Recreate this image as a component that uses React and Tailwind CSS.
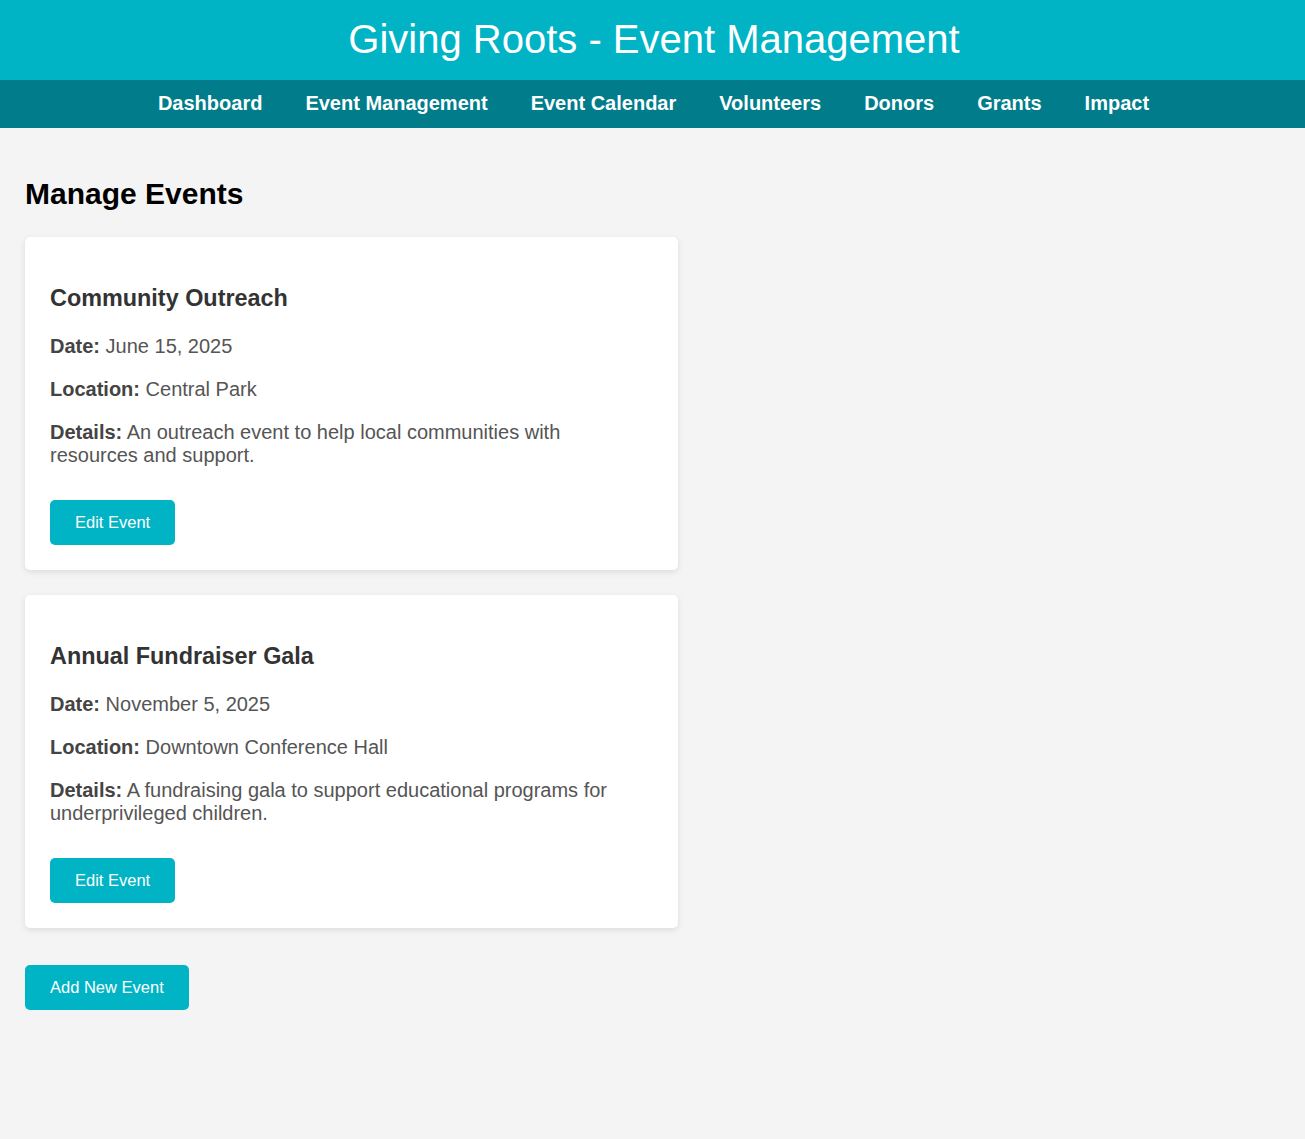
import React from "react";

const events = [
  {
    title: "Community Outreach",
    date: "June 15, 2025",
    location: "Central Park",
    details: "An outreach event to help local communities with resources and support.",
  },
  {
    title: "Annual Fundraiser Gala",
    date: "November 5, 2025",
    location: "Downtown Conference Hall",
    details: "A fundraising gala to support educational programs for underprivileged children.",
  },
];

const nav = ["Dashboard", "Event Management", "Event Calendar", "Volunteers", "Donors", "Grants", "Impact"];

function EventCard({ e }) {
  return (
    <div className="bg-white rounded-[5px] shadow-[0_2px_6px_rgba(0,0,0,0.1)] px-[25px] pt-[48px] pb-[25px] w-[653px]">
      <h3 className="text-[23.4px] font-bold text-[#333] leading-[27px]">{e.title}</h3>
      <p className="mt-[23px] text-[20px] leading-[23px] text-[#555]">
        <strong className="text-[#444]">Date:</strong> {e.date}
      </p>
      <p className="mt-[20px] text-[20px] leading-[23px] text-[#555]">
        <strong className="text-[#444]">Location:</strong> {e.location}
      </p>
      <p className="mt-[20px] text-[20px] leading-[23px] text-[#555] w-[560px]">
        <strong className="text-[#444]">Details:</strong> {e.details}
      </p>
      <button className="mt-[33px] h-[45px] px-[25px] bg-[#00b4c5] text-white rounded-[5px] text-[16.5px] leading-[19px] block">
        Edit Event
      </button>
    </div>
  );
}

export default function App() {
  return (
    <div className="min-h-[1139px] bg-[#f4f4f4] font-['Liberation_Sans',Arial,sans-serif]">
      <header className="h-[80px] bg-[#00b4c5] flex items-center justify-center pb-[3px]">
        <h1 className="text-[40px] text-white leading-[46px] pl-[3px]">Giving Roots - Event Management</h1>
      </header>
      <nav className="h-[48px] bg-[#007c8a] flex items-center justify-center gap-[43px] pb-[2px] pl-[2px]">
        {nav.map((n) => (
          <a key={n} className="text-white font-bold text-[20px] leading-[23px] cursor-pointer">
            {n}
          </a>
        ))}
      </nav>
      <main className="px-[25px] pt-[49px]">
        <h2 className="text-[30px] font-bold text-black leading-[34px]">Manage Events</h2>
        <div className="mt-[26px] flex flex-col gap-[25px]">
          {events.map((e) => (
            <EventCard key={e.title} e={e} />
          ))}
        </div>
        <button className="mt-[37px] h-[45px] px-[25px] bg-[#00b4c5] text-white rounded-[5px] text-[16.5px] leading-[19px] block">
          Add New Event
        </button>
      </main>
    </div>
  );
}
